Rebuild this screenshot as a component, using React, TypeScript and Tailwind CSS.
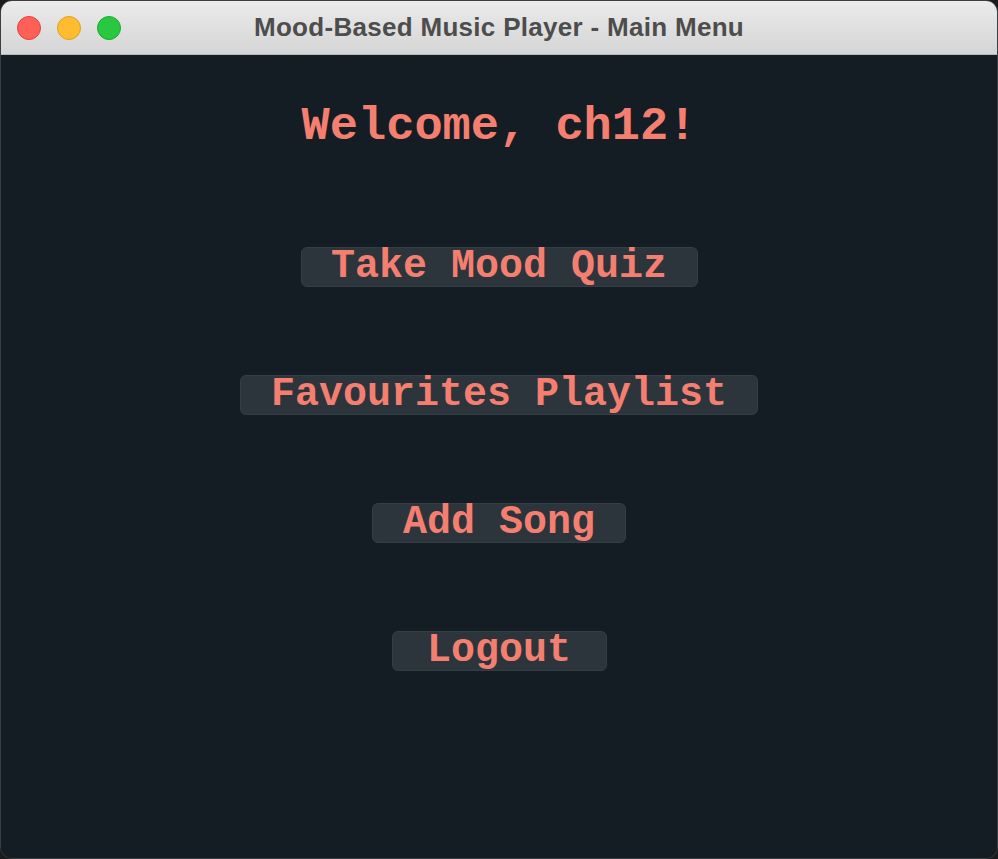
const buttons = [
  { label: "Take Mood Quiz", width: "w-[397px]" },
  { label: "Favourites Playlist", width: "w-[518px]" },
  { label: "Add Song", width: "w-[254px]" },
  { label: "Logout", width: "w-[215px]" },
];

function TrafficLights() {
  return (
    <div className="flex items-center gap-[16px] pl-[16px]">
      <span className="block w-[24px] h-[24px] rounded-full bg-[#fe5f57] border border-[#e0443e]" />
      <span className="block w-[24px] h-[24px] rounded-full bg-[#febc2e] border border-[#dea123]" />
      <span className="block w-[24px] h-[24px] rounded-full bg-[#28c840] border border-[#1aab29]" />
    </div>
  );
}

export default function App() {
  return (
    <div className="w-[998px] h-[859px] bg-[#1b1b1b]">
      <div className="w-full h-full flex flex-col rounded-[12px] overflow-hidden border border-[#3a3f43]">
        {/* Title bar */}
        <div className="relative h-[54px] flex items-center bg-gradient-to-b from-[#ebebeb] to-[#d5d5d5] border-b border-[#b8b8b8] shrink-0">
          <TrafficLights />
          <div className="absolute inset-0 flex items-center justify-center pointer-events-none">
            <span className="font-['Liberation_Sans',Arial,sans-serif] font-bold text-[26px] tracking-[0.3px] text-[#4d4d4d]">
              Mood-Based Music Player - Main Menu
            </span>
          </div>
        </div>

        {/* Body */}
        <div className="flex-1 bg-[#141d23] flex flex-col items-center font-['Liberation_Mono','Courier_New',monospace] font-bold text-[#f47f70]">
          <h1 className="mt-[44px] text-[47px] leading-[56px]">Welcome, ch12!</h1>
          <div className="mt-[92px] flex flex-col items-center gap-[88px]">
            {buttons.map((b) => (
              <button
                key={b.label}
                className={`${b.width} h-[40px] flex items-center justify-center rounded-[6px] bg-[#2c353c] border border-[#343e45] text-[40px] leading-none`}
              >
                {b.label}
              </button>
            ))}
          </div>
        </div>
      </div>
    </div>
  );
}
